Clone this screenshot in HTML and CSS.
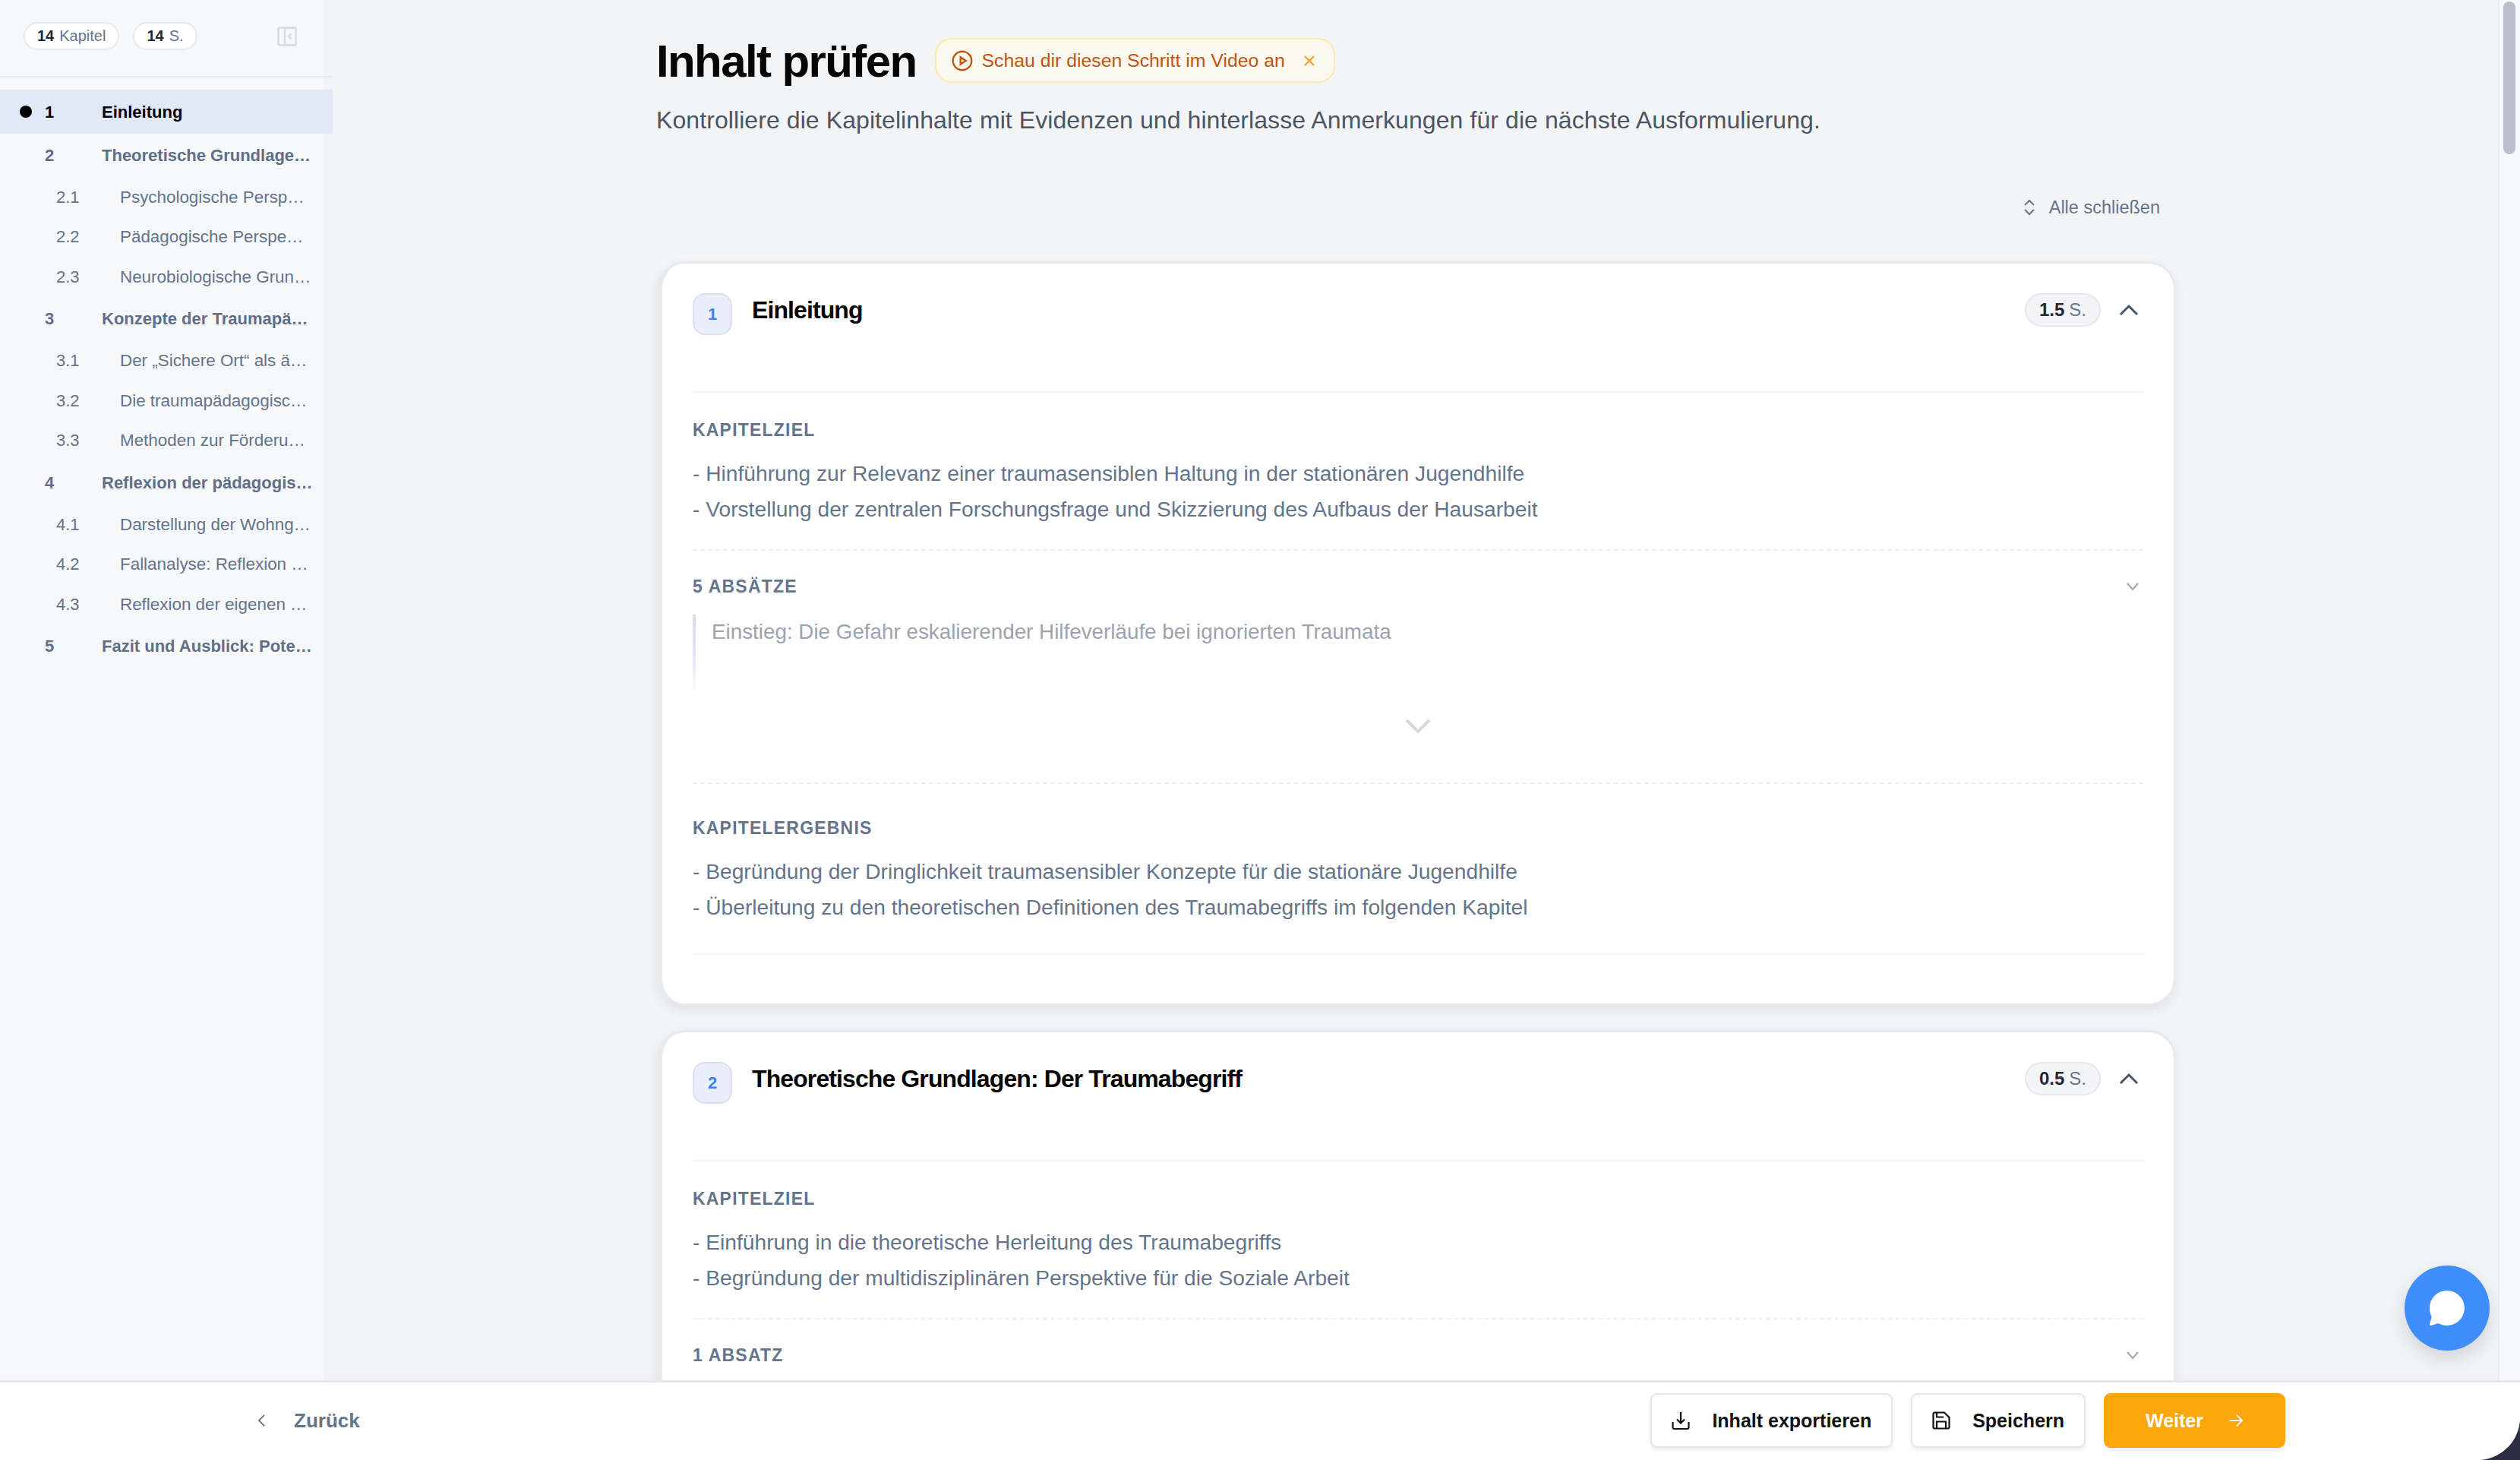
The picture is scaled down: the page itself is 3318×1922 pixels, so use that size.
FILE: index.html
```html
<!DOCTYPE html>
<html lang="de">
<head>
<meta charset="utf-8">
<title>Inhalt prüfen</title>
<link rel="stylesheet" href="styles.css">
</head>
<body>
<div class="app">
  <div class="workspace">
    <aside class="sidebar">
      <div class="side-head">
        <span class="stat"><b>14</b> Kapitel</span>
        <span class="stat"><b>14</b> S.</span>
        <svg class="collapse" viewBox="0 0 26 26" fill="none" stroke="currentColor" stroke-width="2.4"><rect x="1.500" y="1.500" width="23" height="23" rx="2"/><path d="M10 1.500v23"/><path d="M18.500 9.500 15 13l3.500 3.500"/></svg>
      </div>
      <nav class="toc">
        <a class="row top active"><i class="dot"></i><span class="num">1</span><span class="txt">Einleitung</span></a>
        <a class="row top"><span class="num">2</span><span class="txt">Theoretische Grundlage…</span></a>
        <div class="sub">
          <a class="row"><span class="num">2.1</span><span class="txt">Psychologische Persp…</span></a>
          <a class="row"><span class="num">2.2</span><span class="txt">Pädagogische Perspe…</span></a>
          <a class="row"><span class="num">2.3</span><span class="txt">Neurobiologische Grun…</span></a>
        </div>
        <a class="row top"><span class="num">3</span><span class="txt">Konzepte der Traumapä…</span></a>
        <div class="sub">
          <a class="row"><span class="num">3.1</span><span class="txt">Der „Sichere Ort“ als ä…</span></a>
          <a class="row"><span class="num">3.2</span><span class="txt">Die traumapädagogisc…</span></a>
          <a class="row"><span class="num">3.3</span><span class="txt">Methoden zur Förderu…</span></a>
        </div>
        <a class="row top"><span class="num">4</span><span class="txt">Reflexion der pädagogis…</span></a>
        <div class="sub">
          <a class="row"><span class="num">4.1</span><span class="txt">Darstellung der Wohng…</span></a>
          <a class="row"><span class="num">4.2</span><span class="txt">Fallanalyse: Reflexion …</span></a>
          <a class="row"><span class="num">4.3</span><span class="txt">Reflexion der eigenen …</span></a>
        </div>
        <a class="row top"><span class="num">5</span><span class="txt">Fazit und Ausblick: Pote…</span></a>
      </nav>
    </aside>

    <main class="main">
      <div class="title-row">
        <h1>Inhalt prüfen</h1>
        <div class="video-pill">
          <svg class="play" viewBox="0 0 24 24" fill="none" stroke="currentColor" stroke-width="2"><circle cx="12" cy="12" r="10.500"/><path d="M10 8l6 4-6 4z"/></svg>
          <span>Schau dir diesen Schritt im Video an</span>
          <svg class="close" viewBox="0 0 16 16" fill="none" stroke="currentColor" stroke-width="1.800"><path d="M2 2l12 12M14 2 2 14"/></svg>
        </div>
      </div>
      <p class="subtitle">Kontrolliere die Kapitelinhalte mit Evidenzen und hinterlasse Anmerkungen für die nächste Ausformulierung.</p>
      <div class="toolbar">
        <svg class="updown" viewBox="0 0 16 24" fill="none" stroke="currentColor" stroke-width="2"><path d="M2 9l6-6 6 6M2 15l6 6 6-6"/></svg>
        <span>Alle schließen</span>
      </div>

      <section class="card">
        <header class="card-head">
          <span class="badge">1</span>
          <h2>Einleitung</h2>
          <span class="pages"><b>1.5</b> S.</span>
          <svg class="chev-up" viewBox="0 0 26 16" fill="none" stroke="currentColor" stroke-width="3"><path d="M2 14 13 3l11 11"/></svg>
        </header>
        <div class="block goal">
          <h3>Kapitelziel</h3>
          <ul>
            <li>- Hinführung zur Relevanz einer traumasensiblen Haltung in der stationären Jugendhilfe</li>
            <li>- Vorstellung der zentralen Forschungsfrage und Skizzierung des Aufbaus der Hausarbeit</li>
          </ul>
        </div>
        <div class="block paragraphs">
          <div class="block-head">
            <h3>5 Absätze</h3>
            <svg class="chev-down" viewBox="0 0 18 12" fill="none" stroke="currentColor" stroke-width="2"><path d="M2 2l7 8 7-8"/></svg>
          </div>
          <blockquote>Einstieg: Die Gefahr eskalierender Hilfeverläufe bei ignorierten Traumata</blockquote>
          <div class="more"><svg viewBox="0 0 34 20" fill="none" stroke="currentColor" stroke-width="4"><path d="M2 2l15 15L32 2"/></svg></div>
        </div>
        <div class="block result">
          <h3>Kapitelergebnis</h3>
          <ul>
            <li>- Begründung der Dringlichkeit traumasensibler Konzepte für die stationäre Jugendhilfe</li>
            <li>- Überleitung zu den theoretischen Definitionen des Traumabegriffs im folgenden Kapitel</li>
          </ul>
        </div>
      </section>

      <section class="card">
        <header class="card-head">
          <span class="badge">2</span>
          <h2>Theoretische Grundlagen: Der Traumabegriff</h2>
          <span class="pages"><b>0.5</b> S.</span>
          <svg class="chev-up" viewBox="0 0 26 16" fill="none" stroke="currentColor" stroke-width="3"><path d="M2 14 13 3l11 11"/></svg>
        </header>
        <div class="block goal">
          <h3>Kapitelziel</h3>
          <ul>
            <li>- Einführung in die theoretische Herleitung des Traumabegriffs</li>
            <li>- Begründung der multidisziplinären Perspektive für die Soziale Arbeit</li>
          </ul>
        </div>
        <div class="block paragraphs">
          <div class="block-head">
            <h3>1 Absatz</h3>
            <svg class="chev-down" viewBox="0 0 18 12" fill="none" stroke="currentColor" stroke-width="2"><path d="M2 2l7 8 7-8"/></svg>
          </div>
        </div>
      </section>

      <button class="chat" aria-label="Chat">
        <svg viewBox="0 0 46 46" fill="#fff"><path d="M23 0a23 23 0 1 1-9.500 44c-1.200-.5-2.500-.9-4-.4L2 45.900c-1.200.3-2.300-.6-2-1.900l2.200-7.200c.6-1.700.3-3-.3-4.300A23 23 0 0 1 23 0z"/></svg>
      </button>
    </main>

    <div class="scrollbar"><div class="thumb"></div></div>
  </div>

  <footer class="footer">
    <a class="back">
      <svg viewBox="0 0 12 20" fill="none" stroke="currentColor" stroke-width="2"><path d="M10 2 2 10l8 8"/></svg>
      <span>Zurück</span>
    </a>
    <div class="actions">
      <button class="btn">
        <svg viewBox="0 0 24 24" fill="none" stroke="currentColor" stroke-width="2.200"><path d="M12 1v14M7 10.500l5 5 5-5M1.500 14v7a2 2 0 0 0 2 2h17a2 2 0 0 0 2-2v-7"/></svg>
        <span>Inhalt exportieren</span>
      </button>
      <button class="btn">
        <svg viewBox="0 0 24 24" fill="none" stroke="currentColor" stroke-width="2.200"><path d="M4 1.500h12l6.500 6.500v12.500a2 2 0 0 1-2 2h-17a2 2 0 0 1-2-2v-17a2 2 0 0 1 2-2z"/><path d="M6 22.500v-9h12v9M6 1.500v6h9"/></svg>
        <span>Speichern</span>
      </button>
      <button class="btn primary">
        <span>Weiter</span>
        <svg viewBox="0 0 22 22" fill="none" stroke="currentColor" stroke-width="2"><path d="M2 11h18M12 3l8 8-8 8"/></svg>
      </button>
    </div>
  </footer>
</div>
</body>
</html>
```

FILE: styles.css
```css
* { box-sizing: border-box; }
html, body { margin: 0; padding: 0; height: 100%; background: #2b2d42; }
body { font-family: "Liberation Sans", Arial, sans-serif; color: #111; overflow: hidden; }
h1, h2, h3, p, ul, blockquote { margin: 0; padding: 0; }
ul { list-style: none; }
svg { display: block; flex: none; }

.app {
  height: 1922px;
  display: flex;
  flex-direction: column;
  overflow: hidden;
  background: #fff;
  border-bottom-right-radius: 56px;
}
.workspace { flex: 1; min-height: 0; display: flex; }

/* Sidebar */
.sidebar {
  width: 438px;
  flex: none;
  background: #f6f8fa;
  border-right: 12px solid #f2f4f7;
}
.side-head {
  height: 102px;
  margin-right: -12px;
  padding: 29px 47px 0 31px;
  display: flex;
  align-items: flex-start;
  gap: 18px;
  border-bottom: 2px solid #e9ebf1;
}
.stat {
  height: 37px;
  padding: 0 16px;
  display: flex;
  align-items: center;
  gap: 7px;
  background: #fff;
  border: 2px solid #e8eaf0;
  border-radius: 19px;
  font-size: 20px;
  color: #64748b;
  white-space: nowrap;
}
.stat b { color: #1e293b; }
.collapse { width: 26px; height: 26px; margin: 6px 0 0 auto; color: #d6dae1; }
.toc { padding-top: 16px; margin-right: -12px; }
.row {
  height: 52.500px;
  padding-top: 1px;
  display: flex;
  align-items: center;
  font-size: 22.400px;
  color: #64748b;
  white-space: nowrap;
  position: relative;
}
.row .num { width: 84px; margin-left: 74px; flex: none; font-size: 22px; }
.row.top { height: 56px; font-size: 22px; font-weight: 700; color: #5f6f88; }
.row.top .num { width: 75px; margin-left: 59px; }
.row.active { height: 58px; background: #e2e9f6; color: #000; }
.dot {
  position: absolute;
  left: 26px;
  top: 21px;
  width: 16px;
  height: 16px;
  border-radius: 50%;
  background: #000;
}
.sub { padding: 1px 0; }

/* Main */
.main { flex: 1; min-width: 0; padding: 50px 0 0 426px; position: relative; overflow: hidden; background: #f3f4f6; }
.title-row { display: flex; align-items: center; height: 59px; gap: 24px; }
h1 { padding-top: 2px; font-size: 60px; line-height: 59px; font-weight: 700; letter-spacing: -1.600px; color: #050505; }
.video-pill {
  height: 59px;
  width: 527px;
  padding: 0 24px 0 20px;
  display: flex;
  align-items: center;
  gap: 12px;
  background: #fbf9ef;
  border: 2px solid #fde9a8;
  border-radius: 22px;
  color: #c2540a;
  font-size: 24.800px;
  white-space: nowrap;
}
.play { width: 28px; height: 28px; }
.close { width: 16px; height: 16px; margin-left: auto; color: #f59e0b; }
.subtitle { margin-top: 27px; font-size: 32px; letter-spacing: 0.080px; line-height: 44px; color: #4b5563; white-space: nowrap; }
.toolbar {
  width: 2000px;
  height: 40px;
  margin-top: 73px;
  display: flex;
  justify-content: flex-end;
  align-items: center;
  gap: 18px;
  padding-right: 20px;
  color: #64748b;
  font-size: 23.500px;
}
.updown { width: 16px; height: 24px; }

.card {
  width: 1999px;
  margin: 51px 0 32px 1px;
  padding: 0 40px 64px 40px;
  background: #fff;
  border-style: solid;
  border-color: #e8eaee;
  border-width: 3px 2px 3px 7px;
  border-radius: 36px;
  box-shadow: 0 6px 14px rgba(15, 23, 42, 0.08);
}
.card + .card { margin-top: 32px; }
.card-head {
  height: 170px;
  padding-top: 39px;
  display: flex;
  align-items: flex-start;
  border-bottom: 2px solid #f3f4f6;
}
.badge {
  width: 52px;
  height: 55px;
  display: flex;
  align-items: center;
  justify-content: center;
  background: #e9effa;
  border: 2px solid #dbe1ec;
  border-radius: 16px;
  color: #3b82f6;
  font-size: 22px;
  font-weight: 700;
}
h2 {
  margin: 3px 0 0 26px;
  font-size: 32px;
  line-height: 38px;
  font-weight: 700;
  letter-spacing: -0.900px;
  color: #050505;
}
.pages {
  margin-left: auto;
  height: 44px;
  padding: 0 17px;
  display: flex;
  align-items: center;
  gap: 6px;
  background: #f3f4f6;
  border: 2px solid #e5e7eb;
  border-radius: 22px;
  font-size: 24px;
  color: #64748b;
}
.pages b { color: #1e293b; }
.chev-up { width: 26px; height: 16px; margin: 14px 6px 0 24px; color: #475569; }

h3 {
  font-size: 23px;
  line-height: 30px;
  font-weight: 700;
  text-transform: uppercase;
  letter-spacing: 1.200px;
  color: #64748b;
}
.block li { font-size: 28.200px; line-height: 46.500px; color: #64748b; }
.block ul { margin-top: 19px; }
.goal { padding: 34px 0 30px; border-bottom: 2px dashed #eceef1; }
.paragraphs { padding-top: 32px; height: 307px; border-bottom: 2px dashed #eceef1; }
.block-head { display: flex; justify-content: space-between; align-items: center; }
.chev-down { width: 18px; height: 12px; margin-right: 5px; color: #9ca3af; }
blockquote {
  margin-top: 22px;
  height: 106px;
  padding-left: 21px;
  font-size: 27.800px;
  line-height: 46.500px;
  color: #9ca3af;
  border-left: 4px solid;
  border-image: linear-gradient(to bottom, #d8dce4 0%, #e4e9f4 60%, #ffffff 100%) 1;
}
.more { margin-top: 31px; display: flex; justify-content: center; color: #d5d8de; }
.more svg { width: 34px; height: 20px; }
.result { padding: 43px 0 38px; border-bottom: 2px solid #f3f4f6; }

.chat {
  position: absolute;
  left: 2728px;
  top: 1666px;
  width: 112px;
  height: 112px;
  padding: 0;
  display: flex;
  align-items: center;
  justify-content: center;
  border: 0;
  border-radius: 50%;
  background: #3f8efc;
  box-shadow: 0 10px 24px rgba(15, 23, 42, 0.15);
}
.chat svg { width: 46px; height: 46px; }

.scrollbar { width: 29px; flex: none; background: #f8f9fa; border-left: 2px solid #e9ebef; padding: 2px 6px 0 5px; }
.thumb { height: 201px; background: #bcc0ca; border-radius: 8px; }

/* Footer */
.footer {
  height: 105px;
  flex: none;
  position: relative;
  display: flex;
  align-items: flex-start;
  background: #fff;
  border-top: 3px solid #e5e7eb;
  border-bottom-right-radius: 56px;
  box-shadow: 0 -6px 12px rgba(15, 23, 42, 0.012);
  padding: 14px 309px 0 339px;
}
.back { height: 72px; display: flex; align-items: center; gap: 37px; color: #64748b; font-size: 26px; font-weight: 700; }
.back svg { width: 11px; height: 18px; }
.actions { margin-left: auto; display: flex; gap: 24px; }
.btn {
  height: 72px;
  padding: 0 26px;
  display: flex;
  align-items: center;
  gap: 29px;
  background: #fff;
  border: 2px solid #e5e7eb;
  border-radius: 9px;
  box-shadow: 0 3px 4px rgba(15, 23, 42, 0.08);
  font: 700 25px "Liberation Sans", Arial, sans-serif;
  color: #111;
}
.btn svg { width: 24px; height: 24px; }
.btn.primary {
  padding: 0 53px;
  gap: 33px;
  background: #fca60b;
  border-color: #fca60b;
  color: #fff;
}
.btn.primary svg { width: 20px; height: 20px; }
```
